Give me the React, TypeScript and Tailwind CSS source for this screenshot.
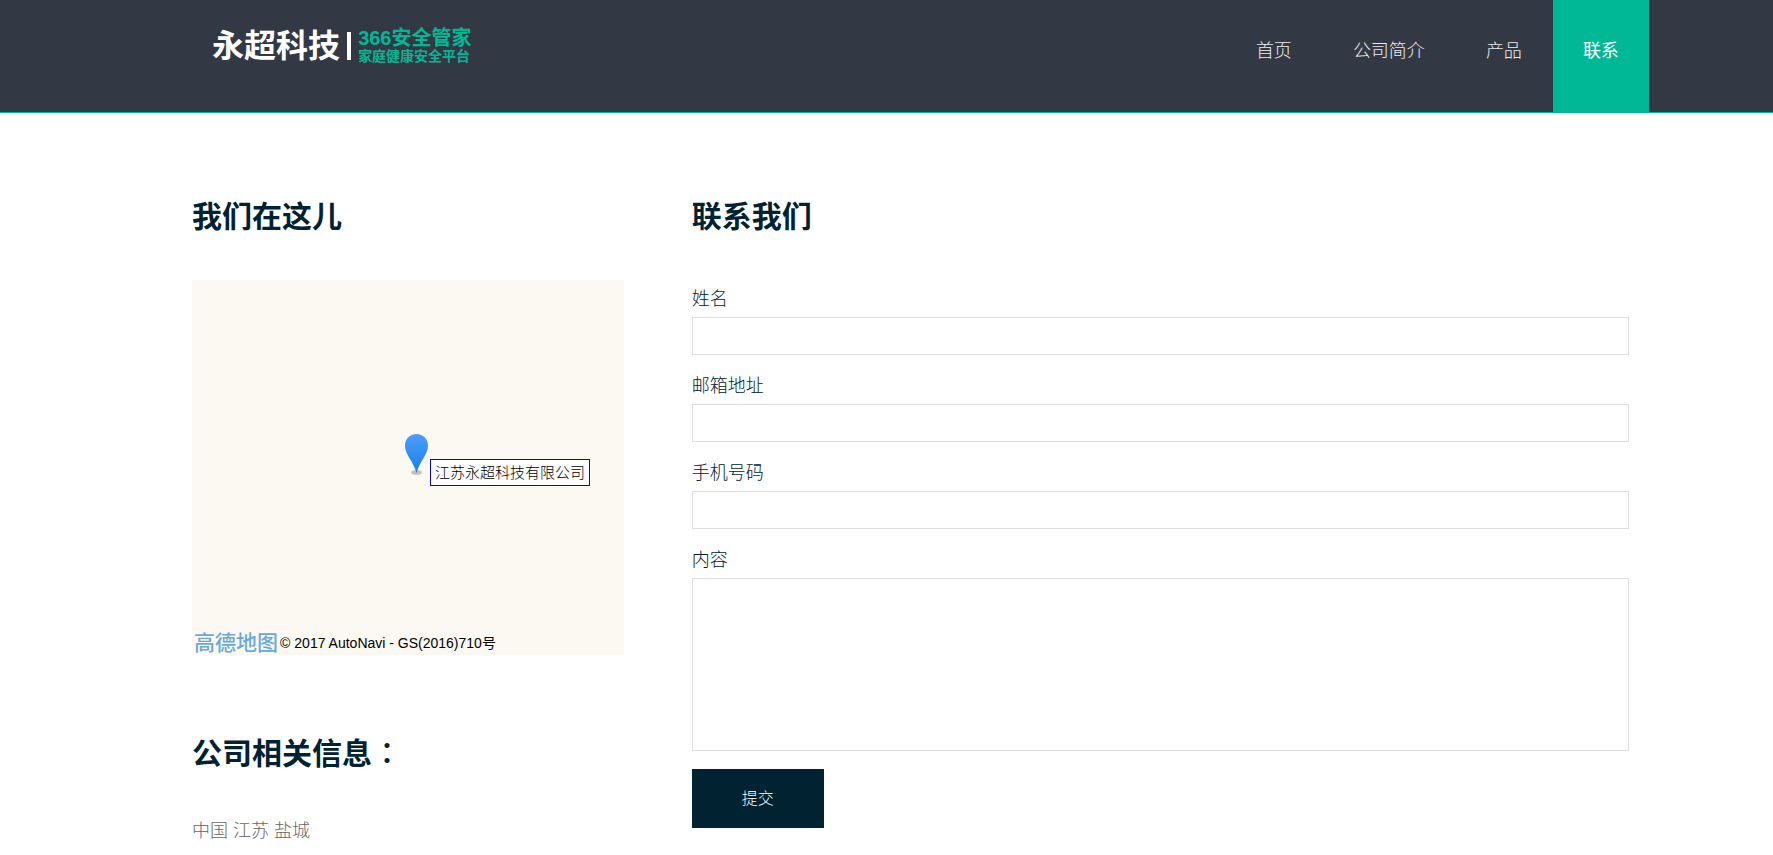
import { FormEvent } from 'react';
import clsx from 'clsx';

const navItems = [
  { label: '首页', href: '#home' },
  { label: '公司简介', href: '#about' },
  { label: '产品', href: '#products' },
  { label: '联系', href: '#contact', active: true },
];

const fields = [
  { id: 'name', label: '姓名', type: 'text' },
  { id: 'email', label: '邮箱地址', type: 'email' },
  { id: 'phone', label: '手机号码', type: 'tel' },
];

const headingClass = 'text-[30px] leading-10 font-bold text-[#002231]';
const labelClass = 'mb-1 block text-lg leading-7 font-light text-[#002231]';
const inputClass =
  'block w-full border border-[#dedede] bg-white px-2 text-base outline-none focus:border-[#00b796]';

function Logo() {
  return (
    <a href="#home" className="flex items-center gap-[7px] pt-[26px] pl-[88px] font-bold">
      <span className="text-[32px] leading-10 text-white">永超科技</span>
      <span className="h-7 w-1 bg-white" aria-hidden />
      <span className="flex flex-col text-[#00b796]">
        <span className="text-xl leading-5">366安全管家</span>
        <span className="text-sm leading-4">家庭健康安全平台</span>
      </span>
    </a>
  );
}

function Header() {
  return (
    <header className="border-b border-[#00b796] bg-[#333944]">
      <div className="mx-auto flex w-[86%] items-start justify-between">
        <Logo />
        <nav className="flex gap-px">
          {navItems.map((item) => (
            <a
              key={item.href}
              href={item.href}
              className={clsx(
                'flex h-28 px-[30px] pt-[37px] text-lg leading-7',
                item.active
                  ? 'bg-[#00b796] text-white'
                  : 'font-light text-[#ededed] hover:text-white',
              )}
            >
              {item.label}
            </a>
          ))}
        </nav>
      </div>
    </header>
  );
}

function MapPin() {
  return (
    <svg width="25" height="43" viewBox="0 0 25 43" aria-hidden>
      <defs>
        <linearGradient id="pin" x1="0" y1="0" x2="0" y2="1">
          <stop offset="0" stopColor="#4f9bff" />
          <stop offset="1" stopColor="#1484e6" />
        </linearGradient>
      </defs>
      <ellipse cx="11.5" cy="38.5" rx="5.5" ry="2.5" fill="#c9bfb8" />
      <path
        d="M11.5 0C5 0 0 5 0 11.500c0 4.500 2 8.500 4.500 12.800 3 5 5.500 9 7 15 1.500-6 4-10 7-15C21 20 23 16 23 11.500 23 5 18 0 11.500 0z"
        fill="url(#pin)"
      />
    </svg>
  );
}

function CompanyMap() {
  return (
    <div className="relative flex h-[375px] flex-col justify-end bg-[#fcf9f2]">
      {/* Marker and its label */}
      <div className="absolute top-[154px] left-1/2 -ml-[3px] flex">
        <MapPin />
        <span className="mt-[25px] border border-[#0000ff] bg-white px-1 text-[15px] leading-[25px] font-light whitespace-nowrap text-black">
          江苏永超科技有限公司
        </span>
      </div>
      <div className="flex items-center gap-0.5 pb-0.5 pl-0.5 text-black">
        <span className="text-[21px] leading-5 font-medium text-[#6aa9d8]">高德地图</span>
        <span className="text-sm leading-5">© 2017 AutoNavi - GS(2016)710号</span>
      </div>
    </div>
  );
}

function ContactForm() {
  const handleSubmit = (e: FormEvent) => {
    e.preventDefault();
  };

  return (
    <form onSubmit={handleSubmit}>
      {fields.map((field) => (
        <div key={field.id} className="mb-[17px]">
          <label htmlFor={field.id} className={labelClass}>
            {field.label}
          </label>
          <input
            id={field.id}
            name={field.id}
            type={field.type}
            className={`${inputClass} h-[38px]`}
          />
        </div>
      ))}
      <div className="mb-[18px]">
        <label htmlFor="content" className={labelClass}>
          内容
        </label>
        <textarea
          id="content"
          name="content"
          className={`${inputClass} h-[173px] resize-none`}
        />
      </div>
      <button
        type="submit"
        className="bg-[#002231] px-[50px] py-[17px] text-base leading-[25px] font-light text-white"
      >
        提交
      </button>
    </form>
  );
}

export default function App() {
  return (
    <div className="bg-white font-['Liberation_Sans','Noto_Sans_CJK_SC',sans-serif]">
      <Header />
      <main className="mx-auto flex w-[86%] pt-[84px] pr-5">
        <section className="w-[33.2%] pl-[68px]">
          <h2 className={`${headingClass} mb-[43px]`}>我们在这儿</h2>
          <CompanyMap />
          <h2 className={`${headingClass} mt-[76px] mb-[43px]`}>
            公司相关信息
            <span className="font-['Noto_Sans_CJK_TC',sans-serif] font-medium">：</span>
          </h2>
          <p className="text-lg leading-7 font-light text-[#666666]">中国 江苏 盐城</p>
        </section>
        <section className="flex-1 pl-[68px]">
          <h2 className={`${headingClass} mb-12`}>联系我们</h2>
          <ContactForm />
        </section>
      </main>
    </div>
  );
}
